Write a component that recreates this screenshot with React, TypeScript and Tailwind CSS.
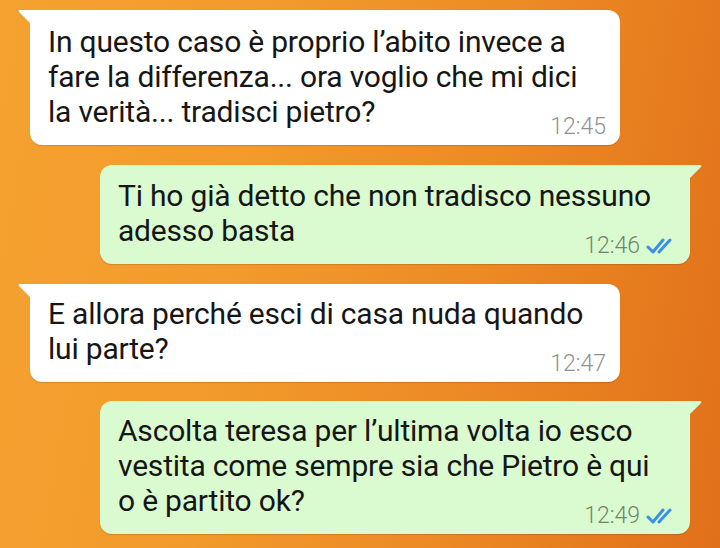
import React from "react";

type Msg = {
  lines: string[];
  time: string;
  mine: boolean;
  mt: string;
  pt: string;
};

const messages: Msg[] = [
  {
    lines: ["In questo caso è proprio l’abito invece a", "fare la differenza... ora voglio che mi dici", "la verità... tradisci pietro?"],
    time: "12:45",
    mine: false,
    mt: "mt-[10px]",
    pt: "pt-[14px]",
  },
  {
    lines: ["Ti ho già detto che non tradisco nessuno", "adesso basta"],
    time: "12:46",
    mine: true,
    mt: "mt-[20px]",
    pt: "pt-[13px]",
  },
  {
    lines: ["E allora perché esci di casa nuda quando", "lui parte?"],
    time: "12:47",
    mine: false,
    mt: "mt-[20px]",
    pt: "pt-[12px]",
  },
  {
    lines: ["Ascolta teresa per l’ultima volta io esco", "vestita come sempre sia che Pietro è qui", "o è partito ok?"],
    time: "12:49",
    mine: true,
    mt: "mt-[19px]",
    pt: "pt-[12px]",
  },
];

const DoubleTick = () => (
  <svg width="30" height="18" viewBox="0 0 30 18" fill="none" stroke="#3b8fe6" strokeWidth="3" strokeLinecap="round" strokeLinejoin="round">
    <polyline points="2,10 7,15 17,3" />
    <polyline points="13,15 24,3" />
  </svg>
);

const Bubble = ({ msg }: { msg: Msg }) => {
  const bg = msg.mine ? "bg-[#dafbd0]" : "bg-white";
  return (
    <div className={`relative w-[590px] ${msg.mt} ${msg.mine ? "ml-[100px]" : "ml-[30px]"}`}>
      {msg.mine ? (
        <svg className="absolute right-[-12px] top-0" width="13" height="14" viewBox="0 0 13 14">
          <path d="M0 0 H11 Q13 0 12 2 L0 14 Z" fill="#dafbd0" />
        </svg>
      ) : (
        <svg className="absolute left-[-12px] top-0" width="13" height="14" viewBox="0 0 13 14">
          <path d="M13 0 H2 Q0 0 1 2 L13 14 Z" fill="#ffffff" />
        </svg>
      )}
      <div
        className={`${bg} ${msg.mine ? "rounded-[12px] rounded-tr-none" : "rounded-[12px] rounded-tl-none"} pl-[18px] pr-[14px] ${msg.pt} pb-[8px] shadow-[0_1px_1px_rgba(0,0,0,0.15)]`}
      >
        <div className="text-[30px] leading-[35px] text-[#161616] whitespace-nowrap tracking-[-0.2px]">
          {msg.lines.map((l) => (
            <div key={l}>{l}</div>
          ))}
        </div>
        <div className="-mt-[12px] flex justify-end items-center gap-[6px] h-[20px]">
          <span className={`text-[23px] leading-[20px] font-light ${msg.mine ? "text-[#6f866c]" : "text-[#909090]"}`}>{msg.time}</span>
          {msg.mine && <DoubleTick />}
        </div>
      </div>
    </div>
  );
};

export default function App() {
  return (
    <div
      className="w-[720px] h-[548px] overflow-hidden flex flex-col bg-[linear-gradient(100deg,#f5a231_0%,#f29a2b_35%,#ec8a24_65%,#e1701a_100%)]"
      style={{ fontFamily: "Roboto, 'Noto Sans', sans-serif" }}
    >
      {messages.map((m) => (
        <Bubble key={m.time} msg={m} />
      ))}
    </div>
  );
}
